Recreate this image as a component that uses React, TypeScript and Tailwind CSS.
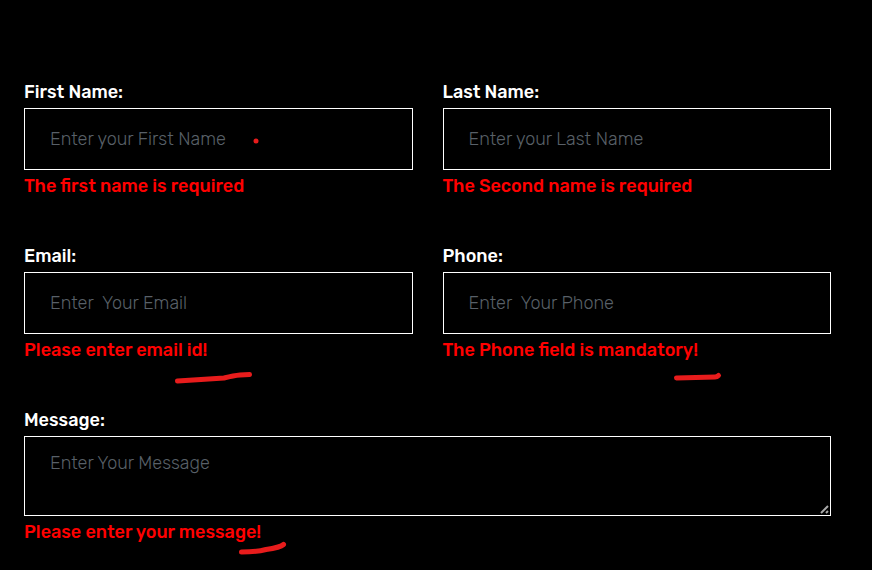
import React from "react";

type FieldProps = {
  id: string;
  label: string;
  placeholder: string;
  error: string;
  type?: string;
  multiline?: boolean;
};

const control =
  "block w-full rounded-none border border-white bg-black px-[25px] text-lg leading-6 font-light text-white outline-none placeholder:text-[#596068] placeholder:opacity-100";

function Field({ id, label, placeholder, error, type = "text", multiline = false }: FieldProps) {
  const errorId = `${id}-error`;
  return (
    <div className={multiline ? "col-span-2" : ""}>
      <label htmlFor={id} className="block text-lg leading-8 font-[460] text-white">
        {label}
      </label>
      {multiline ? (
        <div className="relative">
          <textarea
            id={id}
            placeholder={placeholder}
            aria-describedby={errorId}
            aria-invalid="true"
            className={`${control} h-20 resize-none py-[14px]`}
          />
          <svg
            aria-hidden="true"
            width="9"
            height="9"
            viewBox="0 0 9 9"
            className="pointer-events-none absolute right-[2px] bottom-[2px]"
            fill="none"
            stroke="#a9a9a9"
            strokeWidth="2"
          >
            <path d="M1 8 L8 1 M6 8 L8 6" />
          </svg>
        </div>
      ) : (
        <input
          id={id}
          type={type}
          placeholder={placeholder}
          aria-describedby={errorId}
          aria-invalid="true"
          className={`${control} h-[62px] whitespace-pre`}
        />
      )}
      <p id={errorId} className="text-lg leading-8 font-[460] text-[#ff0000]">
        {error}
      </p>
    </div>
  );
}

export default function App() {
  return (
    <main className="relative min-h-screen bg-black pt-[76px] pr-[41px] pl-6 font-[Rubik,Roboto,sans-serif]">
      <form noValidate className="grid grid-cols-2 gap-x-[30px] gap-y-[38px]">
        <Field id="first-name" label="First Name:" placeholder="Enter your First Name" error="The first name is required" />
        <Field id="last-name" label="Last Name:" placeholder="Enter your Last Name" error="The Second name is required" />
        <Field id="email" type="email" label="Email:" placeholder="Enter  Your Email" error="Please enter email id!" />
        <Field id="phone" type="tel" label="Phone:" placeholder="Enter  Your Phone" error="The Phone field is mandatory!" />
        <Field id="message" multiline label="Message:" placeholder="Enter Your Message" error="Please enter your message!" />
      </form>
      {/* Red pen marks */}
      <svg
        aria-hidden="true"
        width="872"
        height="570"
        viewBox="0 0 872 570"
        className="pointer-events-none absolute top-0 left-0 max-w-full"
        fill="none"
        stroke="#e81c1c"
        strokeWidth="5"
        strokeLinecap="round"
        strokeLinejoin="round"
      >
        <circle cx="256" cy="141" r="2.5" fill="#e81c1c" stroke="none" />
        <path d="M177.500 381 L201 379.500 L224 378 Q234 375.500 240 375 L249.500 374.500" />
        <path d="M676.500 378 L715 377 Q717 377 718.500 375.500" />
        <path d="M241.500 552 Q257 552 266 549.500 Q280 547.500 283.500 544.500" />
      </svg>
    </main>
  );
}
